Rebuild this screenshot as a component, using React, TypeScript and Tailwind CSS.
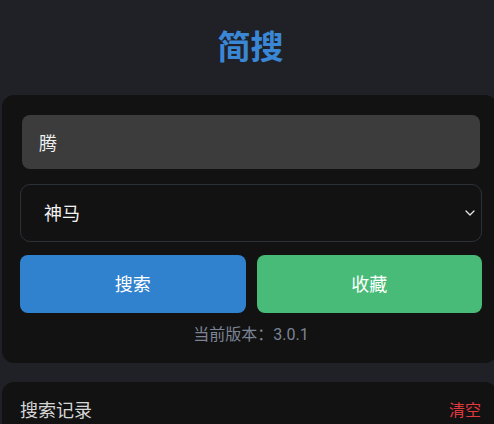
import React, { useState } from 'react';

const FONT = { fontFamily: 'Roboto, "Noto Sans CJK SC", sans-serif' };

function Chevron() {
  return (
    <svg width="10" height="6" viewBox="0 0 10 6" fill="none">
      <path d="M1 1l4 4 4-4" stroke="#e5e5e5" strokeWidth="1.3" strokeLinecap="round" strokeLinejoin="round" />
    </svg>
  );
}

export default function App() {
  const [keyword, setKeyword] = useState('腾');
  const [engine] = useState('神马');
  const version = '3.0.1';

  return (
    <div className="w-[494px] h-[424px] overflow-hidden bg-[#202126]" style={FONT}>
      <div className="w-[497px]">
        {/* Header */}
        <div className="h-[95px] pl-[4px] flex items-center justify-center">
          <h1 className="text-[33px] font-bold text-[#3a87d6] leading-none">简搜</h1>
        </div>

        {/* Search card */}
        <div className="ml-[2px] bg-[#121212] rounded-[12px] pt-[20px] pb-[16px] pl-[18px] pr-[15px]">
          <div className="px-[2px]">
            <input
              value={keyword}
              onChange={(e) => setKeyword(e.target.value)}
              className="w-full h-[54px] rounded-[8px] bg-[#3c3c3c] px-[17px] text-[18px] text-[#f0f0f0] outline-none"
            />
          </div>
          <div className="mt-[15px] h-[58px] rounded-[10px] border border-[#2c3038] flex items-center justify-between pl-[23px] pr-[6px]">
            <span className="text-[18px] text-[#f2f2f2]">{engine}</span>
            <Chevron />
          </div>
          <div className="mt-[13px] grid grid-cols-2 gap-[11px]">
            <button className="h-[58px] rounded-[8px] bg-[#3182ce] text-white text-[18px]">搜索</button>
            <button className="h-[58px] rounded-[8px] bg-[#48bb78] text-white text-[18px]">收藏</button>
          </div>
          <div className="mt-[10px] text-center text-[16px] text-[#7b8494] leading-[24px]">
            当前版本：{version}
          </div>
        </div>

        {/* History card */}
        <div className="ml-[2px] mt-[19px] bg-[#121212] rounded-[12px] pt-[15px] pl-[18px] pr-[16px] h-[80px]">
          <div className="flex items-center justify-between">
            <span className="text-[18px] text-[#d6d6d6]">搜索记录</span>
            <span className="text-[16px] text-[#e0393e]">清空</span>
          </div>
        </div>
      </div>
    </div>
  );
}
